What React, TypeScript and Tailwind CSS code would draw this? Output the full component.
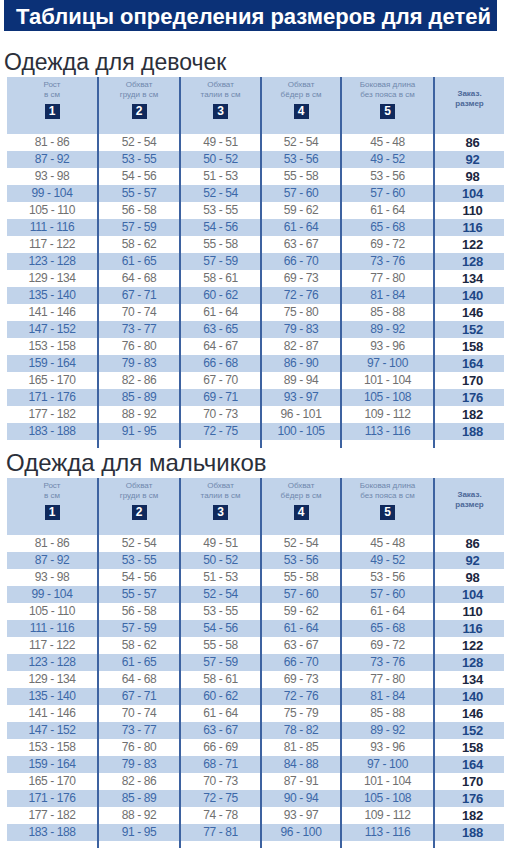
import React from "react";

const heights = [
  "81 - 86", "87 - 92", "93 - 98", "99 - 104", "105 - 110", "111 - 116",
  "117 - 122", "123 - 128", "129 - 134", "135 - 140", "141 - 146", "147 - 152",
  "153 - 158", "159 - 164", "165 - 170", "171 - 176", "177 - 182", "183 - 188",
];
const chest = [
  "52 - 54", "53 - 55", "54 - 56", "55 - 57", "56 - 58", "57 - 59", "58 - 62",
  "61 - 65", "64 - 68", "67 - 71", "70 - 74", "73 - 77", "76 - 80", "79 - 83",
  "82 - 86", "85 - 89", "88 - 92", "91 - 95",
];
const side = [
  "45 - 48", "49 - 52", "53 - 56", "57 - 60", "61 - 64", "65 - 68", "69 - 72",
  "73 - 76", "77 - 80", "81 - 84", "85 - 88", "89 - 92", "93 - 96", "97 - 100",
  "101 - 104", "105 - 108", "109 - 112", "113 - 116",
];
const sizes = [
  "86", "92", "98", "104", "110", "116", "122", "128", "134", "140", "146",
  "152", "158", "164", "170", "176", "182", "188",
];

const girls = {
  waist: [
    "49 - 51", "50 - 52", "51 - 53", "52 - 54", "53 - 55", "54 - 56", "55 - 58",
    "57 - 59", "58 - 61", "60 - 62", "61 - 64", "63 - 65", "64 - 67", "66 - 68",
    "67 - 70", "69 - 71", "70 - 73", "72 - 75",
  ],
  hips: [
    "52 - 54", "53 - 56", "55 - 58", "57 - 60", "59 - 62", "61 - 64", "63 - 67",
    "66 - 70", "69 - 73", "72 - 76", "75 - 80", "79 - 83", "82 - 87", "86 - 90",
    "89 - 94", "93 - 97", "96 - 101", "100 - 105",
  ],
};

const boys = {
  waist: [
    "49 - 51", "50 - 52", "51 - 53", "52 - 54", "53 - 55", "54 - 56", "55 - 58",
    "57 - 59", "58 - 61", "60 - 62", "61 - 64", "63 - 67", "66 - 69", "68 - 71",
    "70 - 73", "72 - 75", "74 - 78", "77 - 81",
  ],
  hips: [
    "52 - 54", "53 - 56", "55 - 58", "57 - 60", "59 - 62", "61 - 64", "63 - 67",
    "66 - 70", "69 - 73", "72 - 76", "75 - 79", "78 - 82", "81 - 85", "84 - 88",
    "87 - 91", "90 - 94", "93 - 97", "96 - 100",
  ],
};

// column widths, left to right
const widths = ["w-[90px]", "w-[82px]", "w-[81px]", "w-[80px]", "w-[93px]", "w-[71px]"];
const divider = "border-l-2 border-[#3d62a0]";

const headers = [
  ["Рост", "в см"],
  ["Обхват", "груди в см"],
  ["Обхват", "талии в см"],
  ["Обхват", "бёдер в см"],
  ["Боковая длина", "без пояса в см"],
];

function SizeTable({ waist, hips }: { waist: string[]; hips: string[] }) {
  return (
    <div className="ml-[7px] w-[497px]">
      <div className="flex h-[57px] bg-[#c1d3ea]">
        {headers.map((h, i) => (
          <div
            key={i}
            className={`${widths[i]} ${i > 0 ? divider : ""} flex flex-col items-center pt-[3px]`}
          >
            <div className="text-[8px] leading-[10px] text-[#7088ad] text-center">
              {h[0]}
              <br />
              {h[1]}
            </div>
            <div className="mt-[4px] w-[15px] h-[15px] bg-[#10295c] text-white text-[12px] leading-[15px] font-bold text-center">
              {i + 1}
            </div>
          </div>
        ))}
        <div className={`${widths[5]} ${divider} pt-[12px] text-center`}>
          <div className="text-[8px] leading-[10px] font-bold text-[#4c6898]">
            Заказ.
            <br />
            размер
          </div>
        </div>
      </div>
      {heights.map((hgt, r) => {
        const striped = r % 2 === 1;
        const cells = [hgt, chest[r], waist[r], hips[r], side[r]];
        return (
          <div
            key={r}
            className={`flex h-[17px] ${striped ? "bg-[#c1d3ea] text-[#3c68a8]" : "bg-white text-[#707070]"}`}
          >
            {cells.map((c, i) => (
              <div
                key={i}
                className={`${widths[i]} ${i > 0 ? divider : ""} text-center text-[12px] leading-[17px] tracking-[-0.4px]`}
              >
                {c}
              </div>
            ))}
            <div
              className={`${widths[5]} ${divider} pl-[6px] text-center text-[13px] leading-[17px] font-bold tracking-[-0.3px] ${striped ? "text-[#1d4787]" : "text-[#1b2640]"}`}
            >
              {sizes[r]}
            </div>
          </div>
        );
      })}
      <div className="flex h-[8px]">
        {widths.map((w, i) => (
          <div key={i} className={`${w} ${i > 0 ? divider : ""}`} />
        ))}
      </div>
    </div>
  );
}

export default function App() {
  return (
    <div
      className="w-[512px] h-[848px] overflow-hidden bg-white"
      style={{ fontFamily: '"Liberation Sans", Arial, sans-serif' }}
    >
      <div className="ml-[4px] w-[493px] h-[31px] bg-[#0b3177] pl-[12px] pt-[6px] text-white text-[22px] leading-[22px] font-bold whitespace-nowrap">
        Таблицы определения размеров для детей
      </div>
      <div className="pl-[4px] pt-[19px] pb-[3px] text-[23px] leading-[24px] text-[#2b2f3a]">
        Одежда для девочек
      </div>
      <SizeTable waist={girls.waist} hips={girls.hips} />
      <div className="pl-[6px] pt-[3px] pb-[3px] text-[24px] leading-[24px] text-[#2b2f3a]">
        Одежда для мальчиков
      </div>
      <SizeTable waist={boys.waist} hips={boys.hips} />
    </div>
  );
}
